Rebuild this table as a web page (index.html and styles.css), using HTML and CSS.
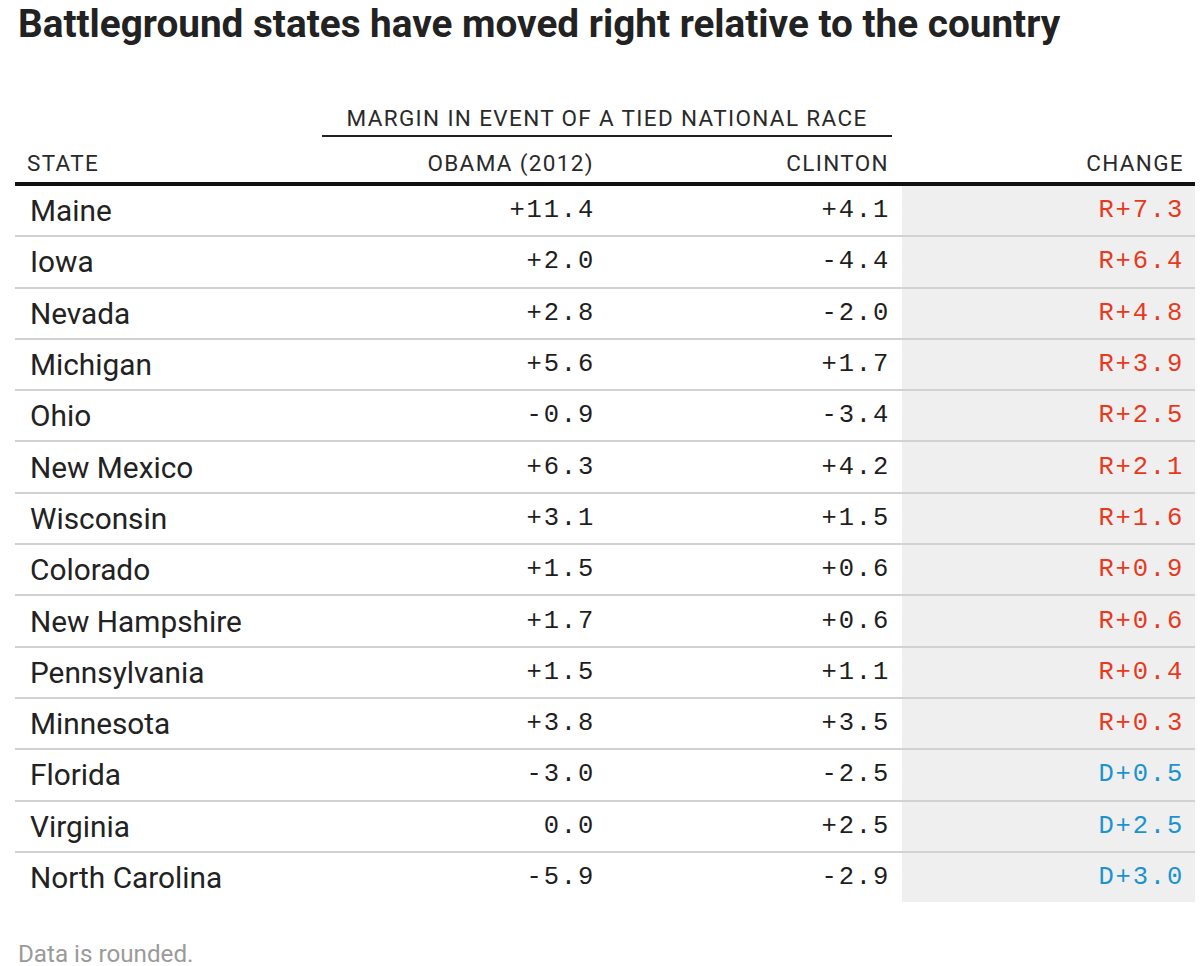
FILE: index.html
```html
<!DOCTYPE html>
<html lang="en">
<head>
<meta charset="utf-8">
<title>Battleground states</title>
<link rel="stylesheet" href="styles.css">
</head>
<body>
<h1 class="title">Battleground states have moved right relative to the country</h1>
<table class="data">
  <colgroup>
    <col class="c-state"><col class="c-obama"><col class="c-clinton"><col class="c-change">
  </colgroup>
  <thead>
    <tr class="spanner-row">
      <th></th>
      <th colspan="2" class="spanner"><span class="spanner-label">MARGIN IN EVENT OF A TIED NATIONAL RACE</span></th>
      <th></th>
    </tr>
    <tr class="head-row">
      <th class="left">STATE</th>
      <th class="right">OBAMA (2012)</th>
      <th class="right">CLINTON</th>
      <th class="right last">CHANGE</th>
    </tr>
  </thead>
  <tbody>
    <tr><td class="state">Maine</td><td class="num">+11.4</td><td class="num">+4.1</td><td class="chg rep">R+7.3</td></tr>
    <tr><td class="state">Iowa</td><td class="num">+2.0</td><td class="num">-4.4</td><td class="chg rep">R+6.4</td></tr>
    <tr><td class="state">Nevada</td><td class="num">+2.8</td><td class="num">-2.0</td><td class="chg rep">R+4.8</td></tr>
    <tr><td class="state">Michigan</td><td class="num">+5.6</td><td class="num">+1.7</td><td class="chg rep">R+3.9</td></tr>
    <tr><td class="state">Ohio</td><td class="num">-0.9</td><td class="num">-3.4</td><td class="chg rep">R+2.5</td></tr>
    <tr><td class="state">New Mexico</td><td class="num">+6.3</td><td class="num">+4.2</td><td class="chg rep">R+2.1</td></tr>
    <tr><td class="state">Wisconsin</td><td class="num">+3.1</td><td class="num">+1.5</td><td class="chg rep">R+1.6</td></tr>
    <tr><td class="state">Colorado</td><td class="num">+1.5</td><td class="num">+0.6</td><td class="chg rep">R+0.9</td></tr>
    <tr><td class="state">New Hampshire</td><td class="num">+1.7</td><td class="num">+0.6</td><td class="chg rep">R+0.6</td></tr>
    <tr><td class="state">Pennsylvania</td><td class="num">+1.5</td><td class="num">+1.1</td><td class="chg rep">R+0.4</td></tr>
    <tr><td class="state">Minnesota</td><td class="num">+3.8</td><td class="num">+3.5</td><td class="chg rep">R+0.3</td></tr>
    <tr><td class="state">Florida</td><td class="num">-3.0</td><td class="num">-2.5</td><td class="chg dem">D+0.5</td></tr>
    <tr><td class="state">Virginia</td><td class="num">0.0</td><td class="num">+2.5</td><td class="chg dem">D+2.5</td></tr>
    <tr><td class="state">North Carolina</td><td class="num">-5.9</td><td class="num">-2.9</td><td class="chg dem">D+3.0</td></tr>
  </tbody>
</table>
<p class="note">Data is rounded.</p>
</body>
</html>
```
FILE: styles.css
```css
html, body {
  margin: 0;
  padding: 0;
  background: #ffffff;
}
body {
  font-family: Roboto, "Liberation Sans", Arial, sans-serif;
  color: #222222;
  width: 1200px;
  height: 966px;
  overflow: hidden;
}
.title {
  margin: 0 0 0 18px;
  padding-top: 2px;
  font-size: 38.7px;
  line-height: 44px;
  font-weight: 700;
  letter-spacing: 0;
  color: #222222;
}
.data {
  margin: 60px 0 0 15px;
  width: 1180px;
  border-collapse: collapse;
  table-layout: fixed;
}
.c-state { width: 307px; }
.c-obama { width: 285px; }
.c-clinton { width: 295px; }
.c-change { width: 293px; }
th {
  font-weight: 400;
  font-size: 22.5px;
  line-height: 24px;
  letter-spacing: 1.35px;
  color: #2a2a2a;
  padding: 0;
}
.spanner-row th {
  padding: 0;
}
.spanner {
  text-align: center;
}
.spanner-label {
  display: block;
  margin-right: 10px;
  padding-bottom: 5px;
  border-bottom: 2px solid #222222;
}
.head-row th {
  padding: 14px 0 7px;
  border-bottom: 4px solid #111111;
}
.head-row .left {
  text-align: left;
  padding-left: 12px;
}
.head-row .right {
  text-align: right;
  padding-right: 13px;
}
.head-row .last {
  padding-right: 11px;
}
td {
  height: 49.3px;
  padding: 0;
  border-bottom: 2px solid #d2d2d2;
  vertical-align: middle;
}
tbody tr:last-child td {
  border-bottom: none;
}
.state {
  font-size: 29.8px;
  padding-left: 15px;
  color: #222222;
}
.num, .chg {
  font-family: "Liberation Mono", "DejaVu Sans Mono", monospace;
  font-size: 25.5px;
  letter-spacing: 1.8px;
  text-align: right;
  padding-right: 12px;
  color: #1e1e1e;
}
.chg {
  background: #efefef;
  padding-right: 11px;
}
.rep { color: #e8391d; }
.dem { color: #1b93d0; }
.note {
  margin: 38px 0 0 18px;
  font-size: 24.2px;
  line-height: 28px;
  color: #9a9a9a;
}
```
